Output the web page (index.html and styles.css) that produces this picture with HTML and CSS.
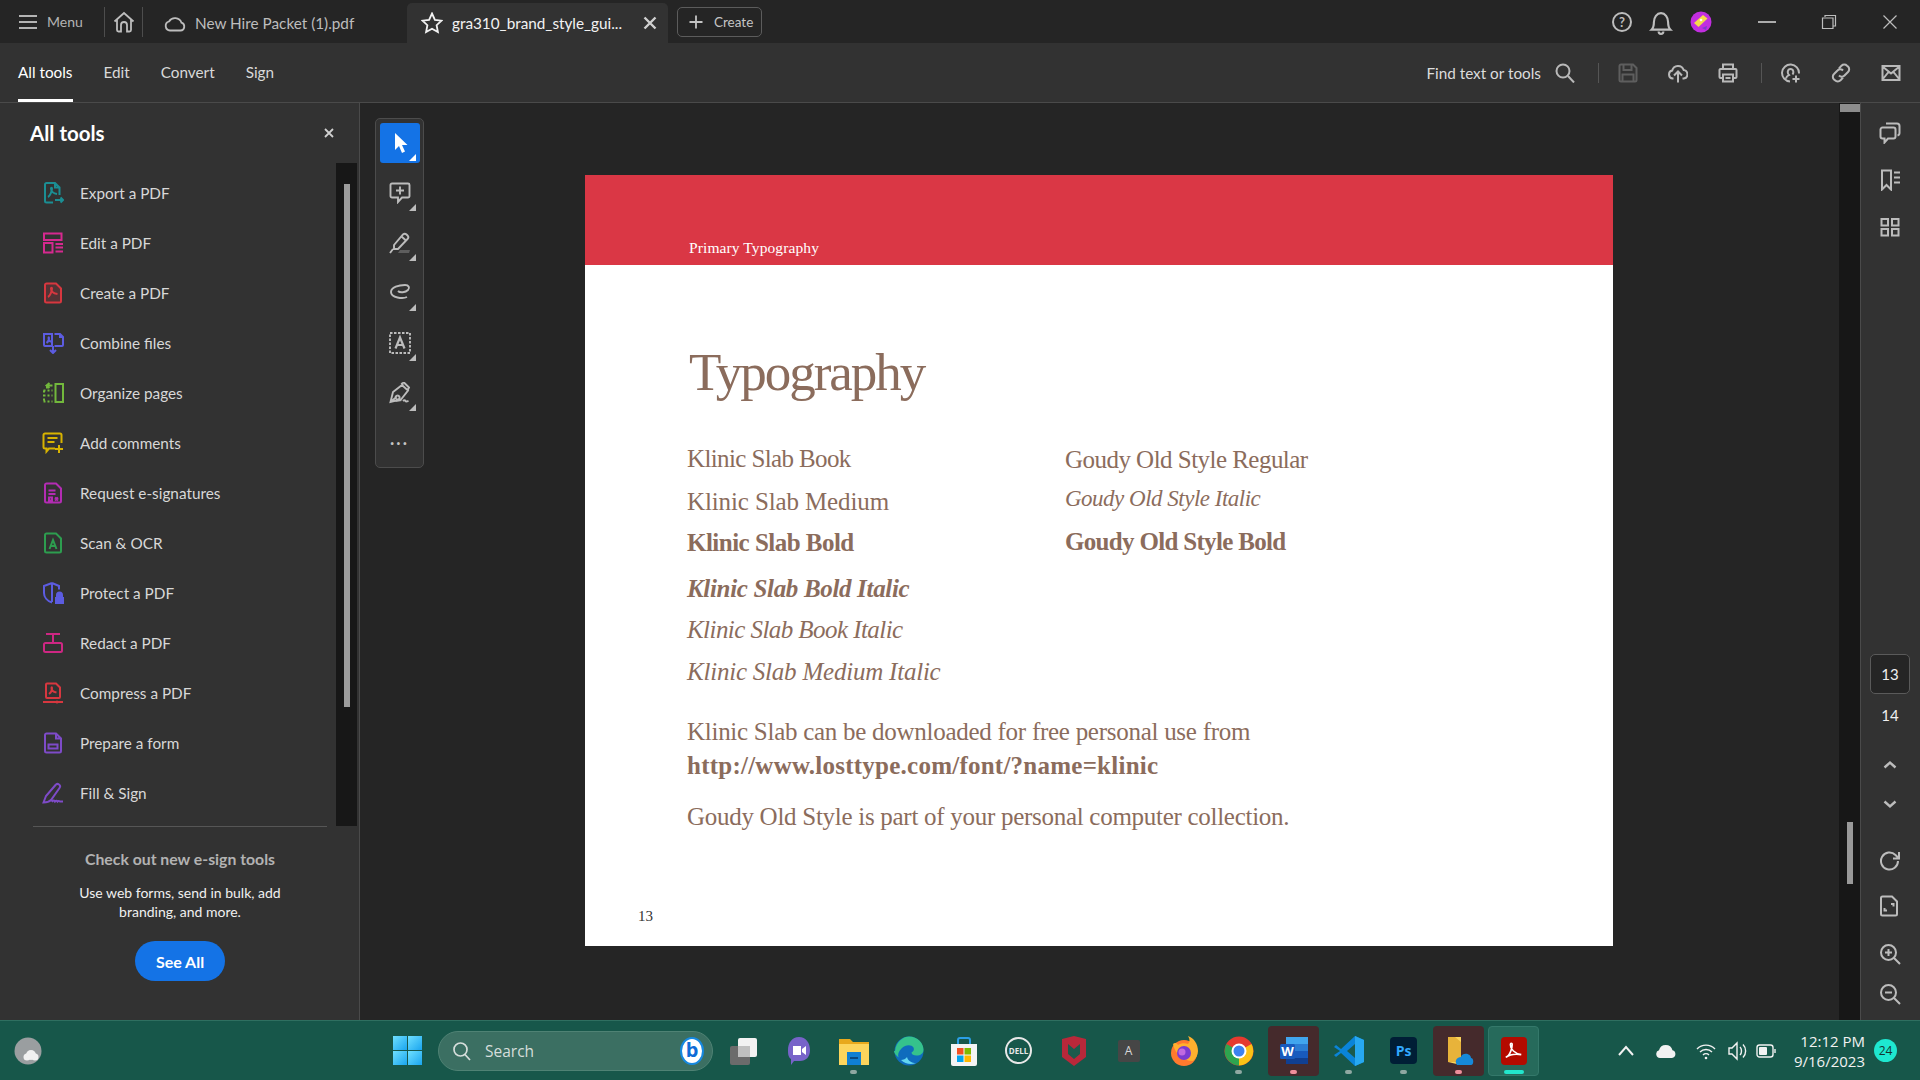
FILE: index.html
```html
<!DOCTYPE html>
<html lang="en">
  <head>
    <meta charset="UTF-8" />
    <title>gra310_brand_style_guide.pdf</title>
    <link rel="stylesheet" href="styles.css">
  </head>
  <body>
    <div class="app">
      <!-- tab strip -->
      <header class="titlebar">
        <div class="menu-btn">
          <svg class="ico-18" viewBox="0 0 18 18"><path d="M0 3h18M0 9h18M0 15h18" /></svg>
          <span>Menu</span>
        </div>
        <div class="home-btn">
          <svg class="ico-22" viewBox="0 0 22 22"><path d="M1.500 10.500 11 2l9.500 8.500M4 8.500V19a1.500 1.500 0 0 0 1.500 1.500H8V14a3 3 0 0 1 6 0v6.500h2.500A1.500 1.500 0 0 0 18 19V8.500" /></svg>
        </div>
        <div class="tab">
          <svg class="ico-22" viewBox="0 0 22 22"><path d="M6 18.500h10.500a4 4 0 0 0 1-7.800A7 7 0 0 0 5 9.500a4.600 4.600 0 0 0 1 9Z" /></svg>
          <span>New Hire Packet (1).pdf</span>
        </div>
        <div class="tab tab-active">
          <svg class="ico-22" viewBox="0 0 22 22"><path d="m11 1.500 2.900 6.300 6.600.8-4.900 4.600 1.300 6.900-5.900-3.400-5.900 3.400 1.300-6.900L1.500 8.600l6.600-.8Z" /></svg>
          <span class="tab-name">gra310_brand_style_gui...</span>
          <svg class="tab-close" viewBox="0 0 14 14"><path d="m1.500 1.500 11 11m0-11-11 11" /></svg>
        </div>
        <div class="create-btn">
          <svg class="ico-14" viewBox="0 0 14 14"><path d="M7 .5v13M.5 7h13" /></svg>
          <span>Create</span>
        </div>

        <div class="title-right">
          <div class="help">?</div>
          <svg class="bell" viewBox="0 0 22 22"><path d="M3 17.500c1.500-1.500 2-3 2-6.500 0-4 2.500-7.500 6-7.500s6 3.500 6 7.500c0 3.500.5 5 2 6.500ZM9 19a2 2 0 0 0 4 0" /></svg>
          <svg class="avatar" viewBox="0 0 22 22">
            <circle cx="11" cy="11" r="10.500" fill="#c22ee0" />
            <path d="m4 12 9-8 4.500 3.500-9 8.500Z" fill="#f6d94a" />
            <path d="m12 17 5-2-1 4Z" fill="#7a3bd0" />
            <circle cx="11" cy="9" r="1.300" fill="#fff" />
          </svg>
          <div class="win-btns">
            <div class="win-btn"><svg class="ico-18" viewBox="0 0 18 18"><path d="M0 9h18" /></svg></div>
            <div class="win-btn"><svg class="ico-16 thin" viewBox="0 0 16 16"><path d="M4 3V1.500h10.500V12H12M1.500 4h10.500v10.500H1.500Z" /></svg></div>
            <div class="win-btn"><svg class="ico-14 thin" viewBox="0 0 14 14"><path d="m.5.500 13 13m0-13-13 13" /></svg></div>
          </div>
        </div>
      </header>

      <!-- second row -->
      <nav class="toolbar">
        <a class="nav-item nav-active">All tools</a>
        <a class="nav-item">Edit</a>
        <a class="nav-item">Convert</a>
        <a class="nav-item">Sign</a>

        <div class="toolbar-right">
          <span class="find">Find text or tools</span>
          <svg class="tb-ico find-ico" viewBox="0 0 20 20"><circle cx="8" cy="8" r="6.500" /><path d="m13 13 6 6.500" /></svg>
          <span class="tb-sep"></span>
          <svg class="tb-ico muted" viewBox="0 0 20 20"><path d="M1.500 3A1.500 1.500 0 0 1 3 1.500h12L18.500 5v12a1.500 1.500 0 0 1-1.500 1.500H3A1.500 1.500 0 0 1 1.500 17ZM5.500 1.500V7h8V1.500M4.500 18.500V11.500h11v7" /></svg>
          <svg class="tb-ico" viewBox="0 0 20 20"><path d="M5.500 15.500H4.800a4 4 0 0 1-.6-7.900 6 6 0 0 1 11.500-.6 4.300 4.300 0 0 1 .1 8.500h-1.300M10 19.500V9M6 12.500 10 8.500l4 4" /></svg>
          <svg class="tb-ico" viewBox="0 0 20 20"><path d="M5 6V1.500h10V6M5 15H2.500a1 1 0 0 1-1-1V7a1 1 0 0 1 1-1h15a1 1 0 0 1 1 1v7a1 1 0 0 1-1 1H15M5 11.500h10v7H5ZM7.500 15h5" /></svg>
          <span class="tb-sep"></span>
          <svg class="tb-ico" viewBox="0 0 20 20"><path d="M9 18.500a8.500 8.500 0 1 1 9-8M5 15.500c.5-2.500 2-3 3-3.500-2-2-1.500-6 1.500-6s3.500 3.500 2 5.500M15 12.500v7M11.500 16h7" /></svg>
          <svg class="tb-ico" viewBox="0 0 20 20"><path d="m8 5.500 2.500-2.800a3.800 3.800 0 0 1 5.500 0l1 .8a3.800 3.800 0 0 1 0 5.500l-3.500 3.500a3.800 3.800 0 0 1-5.500 0M12 14.500l-2.500 2.800a3.800 3.800 0 0 1-5.500 0l-1-.8a3.800 3.800 0 0 1 0-5.500L6.500 7.500a3.800 3.800 0 0 1 5.500 0" /></svg>
          <svg class="tb-ico" viewBox="0 0 20 20"><path d="M1.500 3h17v14h-17ZM1.500 3.500 10 10.500l8.500-7M1.500 16.500l6-7.500M18.500 16.500l-6-7.500" /></svg>
        </div>
      </nav>

      <div class="main">
        <!-- all tools panel -->
        <aside class="panel">
          <div class="panel-head">
            <h2>All tools</h2>
            <svg class="panel-close" viewBox="0 0 10 10"><path d="m1 1 8 8m0-8-8 8" /></svg>
          </div>
          <div class="panel-scroll">
            <ul class="tool-list">
              <li><svg class="c-teal" viewBox="0 0 22 22"><path d="M11 20.500H4.500A1.500 1.500 0 0 1 3 19V2.500A1.500 1.500 0 0 1 4.500 1H13l4.500 4.500V13M13 1v4.500h4.500M6 15c2-1 4-6 4-8.500 0-1-1 -1-1 0 0 3 3 5 6 5.500M13 18h8M18.500 15.500 21 18l-2.500 2.500" /></svg><span>Export a PDF</span></li>
              <li><svg class="c-pink" viewBox="0 0 22 22"><path d="M2 1.500h17.500v6.500H2ZM2 11h8.500v9.500H2ZM13.500 12H21M13.500 15.500H21M13.500 19.500H21" /></svg><span>Edit a PDF</span></li>
              <li><svg class="c-red" viewBox="0 0 22 22"><path class="tint" d="M4.500 1.500H14L19 6.500V19a1.500 1.500 0 0 1-1.500 1.500h-13A1.500 1.500 0 0 1 3 19V3a1.500 1.500 0 0 1 1.500-1.500Z" /><path d="M6 15c2-1 4-6 4-8.500 0-1-1-1-1 0 0 3 3 5 6.500 5.500" /></svg><span>Create a PDF</span></li>
              <li><svg class="c-indigo" viewBox="0 0 22 22"><path d="M2 2h8v12H3a1 1 0 0 1-1-1ZM12.500 14H20a1 1 0 0 0 1-1V5l-3-3h-5.500M18 2v3h3M11 14v7M8 18l3 3 3-3M4.500 11c1.500-1 2.500-3 2.500-5 0-1-.5-1-.5 0 0 2 1 3 2.500 4" /></svg><span>Combine files</span></li>
              <li><svg class="c-green" viewBox="0 0 22 22"><path d="M13.500 2H21v18h-7.500Z" /><path d="M10.500 3.500H5M7.500 1 4.500 3.500 7.500 6M5 3.500v3" /><path class="dots" d="M1.500 8.500h9M1.500 13.500h9M1.500 19.500h9M2 8.500v11" /></svg><span>Organize pages</span></li>
              <li><svg class="c-yellow" viewBox="0 0 22 22"><path d="M13 16.500H7l-2.500 3v-3H3a1.500 1.500 0 0 1-1.500-1.500V3A1.500 1.500 0 0 1 3 1.500h15A1.500 1.500 0 0 1 19.500 3v8M5.500 6h10M5.500 10h7M17 13v8M13 17h8" /></svg><span>Add comments</span></li>
              <li><svg class="c-purple" viewBox="0 0 22 22"><path d="M4.500 1.500H14L19 6.500V19a1.500 1.500 0 0 1-1.500 1.500h-13A1.500 1.500 0 0 1 3 19V3a1.500 1.500 0 0 1 1.500-1.500ZM6.500 8.500h7M6.500 12h7M7 15.500h3v3H7ZM13 15.500l3 3m0-3-3 3" /></svg><span>Request e-signatures</span></li>
              <li><svg class="c-scan" viewBox="0 0 22 22"><path d="M4.500 1.500H14L19 6.500V19a1.500 1.500 0 0 1-1.500 1.500h-13A1.500 1.500 0 0 1 3 19V3a1.500 1.500 0 0 1 1.500-1.500ZM7.500 17l3.500-9 3.500 9M8.800 14h4.400" /></svg><span>Scan &amp; OCR</span></li>
              <li><svg class="c-indigo" viewBox="0 0 22 22"><path d="M10 1 2 4v7c0 4 3 8 8 9.500M10 1l7 3v3.500M10 1v19" /><path class="solid" d="M14 15v-2a3.500 3.500 0 0 1 7 0v2h1v7h-9v-7Z" /></svg><span>Protect a PDF</span></li>
              <li><svg class="c-pink2" viewBox="0 0 22 22"><path d="M4 2h14M11 2v8M3.500 11h15A1.500 1.500 0 0 1 20 12.500v6a1.500 1.500 0 0 1-1.500 1.500h-15A1.500 1.500 0 0 1 2 18.500v-6A1.500 1.500 0 0 1 3.500 11Z" /></svg><span>Redact a PDF</span></li>
              <li><svg class="c-red" viewBox="0 0 22 22"><path d="M5 1.500h9l4 4V15a1 1 0 0 1-1 1H5a1 1 0 0 1-1-1V2.500a1 1 0 0 1 1-1ZM7 12c1.500-1 3-4 3-6 0-1-.5-1-.5 0 0 2 2 4 5 4.500M1 20h20" /><circle class="solid" cx="15" cy="20" r="1.500" /></svg><span>Compress a PDF</span></li>
              <li><svg class="c-violet" viewBox="0 0 22 22"><path d="M4.500 1.500H14L19 6.500V19a1.500 1.500 0 0 1-1.500 1.500h-13A1.500 1.500 0 0 1 3 19V3a1.500 1.500 0 0 1 1.500-1.500ZM14 1.500v5h5M6.500 12.500h9v4h-9Z" /></svg><span>Prepare a form</span></li>
              <li><svg class="c-violet" viewBox="0 0 22 22"><path d="M1.500 20.500 4 14 13.500 3a2.500 2.500 0 0 1 4 3L9 18c-1.500 1.500-4.500 2.500-7.500 2.500ZM10 20c1-2 2.500-2 3-.5 1-1 2-1 2.500 0 .8-.8 1.500-.8 2.500 0h3" /></svg><span>Fill &amp; Sign</span></li>
            </ul>
            <div class="panel-track"><div class="panel-thumb"></div></div>
          </div>
          <div class="promo">
            <h3>Check out new e-sign tools</h3>
            <p>Use web forms, send in bulk, add<br>branding, and more.</p>
            <button class="see-all">See All</button>
          </div>
        </aside>

        <!-- document area -->
        <section class="canvas">
          <div class="quick-tools">
            <div class="qt qt-active"><svg viewBox="0 0 22 22"><path class="fill" d="M6 1v17l4-4 3 7 3-1.500-3-6.500h5.500Z" /></svg></div>
            <div class="qt"><svg viewBox="0 0 22 22"><path d="M3 1.500h16A1.500 1.500 0 0 1 20.500 3v11a1.500 1.500 0 0 1-1.500 1.500h-6L9 20v-4.500H3A1.500 1.500 0 0 1 1.500 14V3A1.500 1.500 0 0 1 3 1.500ZM11 4.500v8M7 8.500h8" /></svg></div>
            <div class="qt"><svg viewBox="0 0 22 22"><path d="m5 13 9-10.500a2.500 2.500 0 0 1 3.500 0l1 1a2.500 2.500 0 0 1 0 3.500L9 17H5ZM12.500 4.500l5 4.500M1 21l3-4" /><path class="dim" d="M9 21h11l1-3H11Z" /></svg></div>
            <div class="qt"><svg viewBox="0 0 22 22"><path d="M18 15c-4 2-16 1-16-5 0-5 8-7 14-7 4 0 5 3 3 5-2.500 2.500-8 3-10 1" /></svg></div>
            <div class="qt"><svg viewBox="0 0 22 22"><path class="dash" d="M1 1h20v20H1Z" /><path class="bold" d="m6.500 16.500 4.500-11 4.500 11M8 13h6" /></svg></div>
            <div class="qt"><svg viewBox="0 0 22 22"><path d="M1.500 20 4 10l9-7 6 5.500-7 9Zm5-1 6-1M14 3l-1-1.500 2-1 5 5-1 2M8.500 13.500a2 2 0 1 0 .1 0M1.500 20l6-5M14 19c1-1 2-1 2.500 0s1.500.5 3 0" /></svg></div>
            <div class="qt-more">...</div>
          </div>

          <article class="page">
            <div class="page-band">Primary Typography</div>
            <div class="page-body">
              <h1>Typography</h1>
              <div class="fonts">
                <ul class="font-col">
                  <li class="k-book">Klinic Slab Book</li>
                  <li class="k-medium">Klinic Slab Medium</li>
                  <li class="k-bold">Klinic Slab Bold</li>
                  <li class="k-bold-italic">Klinic Slab Bold Italic</li>
                  <li class="k-book-italic">Klinic Slab Book Italic</li>
                  <li class="k-medium-italic">Klinic Slab Medium Italic</li>
                </ul>
                <ul class="font-col">
                  <li class="g-regular">Goudy Old Style Regular</li>
                  <li class="g-italic">Goudy Old Style Italic</li>
                  <li class="g-bold">Goudy Old Style Bold</li>
                </ul>
              </div>
              <p class="note note-k">Klinic Slab can be downloaded for free personal use from<br><b>http://www.losttype.com/font/?name=klinic</b></p>
              <p class="note note-2">Goudy Old Style is part of your personal computer collection.</p>
              <div class="page-no">13</div>
            </div>
          </article>
        </section>

        <div class="doc-track">
          <div class="doc-thumb-top"></div>
          <div class="doc-thumb"></div>
        </div>

        <!-- right rail -->
        <aside class="rail">
          <svg class="rail-ico" viewBox="0 0 22 22"><path d="M7 1.500h11A2.500 2.500 0 0 1 20.500 4v7a2.500 2.500 0 0 1-2 2.400M3.500 5.500h11A2 2 0 0 1 16.500 7.500v7a2 2 0 0 1-2 2H9l-3.500 4v-4H3.500a2 2 0 0 1-2-2v-7a2 2 0 0 1 2-2Z" /></svg>
          <svg class="rail-ico" viewBox="0 0 22 22"><path d="M3 1.500h9v19L7.500 16 3 20.500ZM15 3.500h6M15 8.500h6M15 13.500h6" /></svg>
          <svg class="rail-ico" viewBox="0 0 22 22"><path d="M2.500 3h6.500v6.500H2.500ZM13 3h6.500v6.500H13ZM2.500 13H9v6.500H2.500ZM13 13h6.500v6.500H13Z" /></svg>

          <div class="page-box">13</div>
          <div class="page-next">14</div>
          <svg class="rail-chev chev-up" viewBox="0 0 14 10"><path d="m1.500 7.500 5.500-5 5.500 5" /></svg>
          <svg class="rail-chev chev-down" viewBox="0 0 14 10"><path d="m1.500 2.500 5.500 5 5.500-5" /></svg>
          <div class="rail-sep"></div>
          <svg class="rail-ico r-rotate" viewBox="0 0 22 22"><path d="M19 11a8.500 8.500 0 1 1-2.500-6L19.500 8M20 2v6.500h-6" /></svg>
          <svg class="rail-ico r-fit" viewBox="0 0 22 22"><path d="M3.500 1.500H13l5 5V19a1.500 1.500 0 0 1-1.500 1.500h-13A1.500 1.500 0 0 1 2 19V3a1.500 1.500 0 0 1 1.500-1.500ZM12 9h2.500v2.500M8 15.500H5.500V13" /></svg>
          <svg class="rail-ico r-zoom-in" viewBox="0 0 22 22"><circle cx="9.500" cy="9.500" r="7.500" /><path d="m15 15 6 6M9.500 6v7M6 9.500h7" /></svg>
          <svg class="rail-ico r-zoom-out" viewBox="0 0 22 22"><circle cx="9.500" cy="9.500" r="7.500" /><path d="m15 15 6 6M6 9.500h7" /></svg>
        </aside>
      </div>

      <!-- windows taskbar -->
      <footer class="taskbar">
        <svg class="widget" viewBox="0 0 28 28">
          <circle cx="14" cy="14" r="13.500" fill="#9a9ea0" />
          <circle cx="17" cy="18" r="5" fill="#f1f1f1" />
          <circle cx="21" cy="20" r="3.500" fill="#f1f1f1" />
          <circle cx="13" cy="20" r="3.500" fill="#f1f1f1" />
        </svg>

        <div class="win-logo"><i></i><i></i><i></i><i></i></div>

        <div class="search">
          <svg viewBox="0 0 20 20"><circle cx="8.500" cy="8.500" r="6.500" /><path d="m13 13.500 5 5.500" /></svg>
          <span>Search</span>
          <div class="bing">b</div>
        </div>

        <div class="apps">
          <div class="app-item">
            <svg viewBox="0 0 30 30"><rect x="9" y="2" width="19" height="19" rx="2" fill="#f2f2f2" /><rect x="1" y="10" width="20" height="19" rx="2" fill="#6b6b6b" /><rect x="9" y="10" width="12" height="11" fill="#c0c0c0" /></svg>
          </div>
          <div class="app-item">
            <svg viewBox="0 0 30 30"><path d="M15 1c7 0 11 6 11 13s-4 11-10 11h-6l-3 4v-6C4 21 4 17 4 14 4 7 8 1 15 1Z" fill="#7763c9" /><path d="M9 10h8v9H9ZM18 13l4-3v9l-4-3Z" fill="#fff" /></svg>
          </div>
          <div class="app-item has-dot">
            <svg viewBox="0 0 30 30"><path d="M0 3h11l3 3h16v22H0Z" fill="#e8a91c" /><path d="M0 8h30v21H0Z" fill="#fcd55c" /><path d="M8 16h14v13H8Z" fill="#0f7fd2" /><path d="M11 21h8v2h-8Z" fill="#09487f" /></svg>
          </div>
          <div class="app-item">
            <svg viewBox="0 0 30 30"><circle cx="15" cy="15" r="14.500" fill="#0f6cbd" /><path d="M1 15C2 5 10 .5 15 .5c9 0 14.500 7 14.500 13 0 4-3 6-7 6-3 0-5-1-5-3 2-1 3-3 2-5-2-3-8-3-12 1-3 3-4 6-3 9-2-2-4.500-4-4.500-6.500Z" fill="#35c28c" /><path d="M7 24c4 4 10 5 15 3-4 0-8-2-9-6-1 2-4 3-6 3Z" fill="#63d6f0" /></svg>
          </div>
          <div class="app-item">
            <svg viewBox="0 0 30 30"><path d="M2 8h26v20a2 2 0 0 1-2 2H4a2 2 0 0 1-2-2Z" fill="#f4f4f4" /><path d="M9 8V4a2 2 0 0 1 2-2h8a2 2 0 0 1 2 2v4" fill="none" stroke="#2b9fe6" stroke-width="2" /><rect x="8" y="12" width="6.500" height="6.500" fill="#f25022" /><rect x="15.500" y="12" width="6.500" height="6.500" fill="#7fba00" /><rect x="8" y="19.500" width="6.500" height="6.500" fill="#00a4ef" /><rect x="15.500" y="19.500" width="6.500" height="6.500" fill="#ffb900" /></svg>
          </div>
          <div class="app-item">
            <div class="dell">DELL</div>
          </div>
          <div class="app-item">
            <svg viewBox="0 0 30 30"><path d="M3 3 15 0l12 3v18l-12 9-12-9Z" fill="#b8283a" /><path d="M9 8l6 5 6-5v10l-6 5-6-5Z" fill="#1b5a4c" /></svg>
          </div>
          <div class="app-item">
            <div class="a-tile">A</div>
          </div>
          <div class="app-item">
            <svg viewBox="0 0 30 30"><circle cx="15" cy="17" r="13" fill="#ff7a2e" /><path d="M4 8c2 10 10 17 20 17 3-3 5-6 5-10C29 8 25 2 19 0c2 3 2 6 0 8-3-1-7-1-10 1-1-2-3-3-5-1Z" fill="#ffb02e" /><circle cx="15" cy="17" r="7" fill="#7a3bd0" /><circle cx="13" cy="16" r="3.500" fill="#c06ae0" /></svg>
          </div>
          <div class="app-item has-dot">
            <svg viewBox="0 0 30 30"><circle cx="15" cy="15" r="14.500" fill="#e53a2f" /><path d="M15 15 27.500 8A14.500 14.500 0 0 1 15 29.500Z" fill="#fbc116" /><path d="M15 15 15 29.500A14.500 14.500 0 0 1 2.500 8Z" fill="#2ea44f" /><circle cx="15" cy="15" r="7.500" fill="#fff" /><circle cx="15" cy="15" r="5.500" fill="#3c82f0" /></svg>
          </div>
          <div class="app-item app-open has-dot dot-pink">
            <svg viewBox="0 0 30 30"><path d="M7 1h21a1 1 0 0 1 1 1v25a1 1 0 0 1-1 1H7Z" fill="#2b7cd3" /><path d="M7 1h22v7H7Z" fill="#41a5ee" /><path d="M7 15h22v7H7Z" fill="#185abd" /><path d="M7 22h22v6H7Z" fill="#103f91" /><rect x="1" y="8" width="15" height="15" rx="1.500" fill="#185abd" /><text class="word-w" x="8.500" y="20">W</text></svg>
          </div>
          <div class="app-item has-dot">
            <svg viewBox="0 0 30 30"><path d="M21 0 30 4v22l-9 4L7 17l-5 4-2-2 6-4-6-4 2-2 5 4Z" fill="#0a84d8" /><path d="m21 8-8 7 8 7Z" fill="#1b5a4c" /><path d="M21 0 30 4v22l-9 4Z" fill="#27a8f0" /></svg>
          </div>
          <div class="app-item has-dot">
            <div class="ps-tile">Ps</div>
          </div>
          <div class="app-item app-open has-dot dot-pink">
            <svg viewBox="0 0 30 30"><path d="M4 1h13v28l-13-3Z" fill="#fcd55c" /><path d="M4 1h7l6 5v23l-6-3H4Z" fill="#e8b33a" /><path d="M13 29c-3-4 0-8 4-8 1-5 10-4 10 1 3 0 3 7 0 7Z" fill="#1689d8" /></svg>
          </div>
          <div class="app-item app-active">
            <div class="acro-tile">
              <svg viewBox="0 0 22 22"><path d="M2 18c5-2 7-11 7-14 0-2-2-2-2 0 0 5 5 10 12 11-6-1-13 0-17 3Z" /></svg>
            </div>
          </div>
        </div>

        <div class="tray">
          <svg class="tray-ico" viewBox="0 0 20 20"><path d="m3 14 7-8 7 8" /></svg>
          <svg class="tray-ico tray-wide" viewBox="0 0 20 20"><path class="cloud" d="M4 17a4 4 0 0 1-1-7.800 7 7 0 0 1 13.500 0A4 4 0 0 1 16 17Z" /></svg>
          <svg class="tray-ico tray-wide thin" viewBox="0 0 20 20"><path d="M1 8a12.500 12.500 0 0 1 18 0M4 11a8.500 8.500 0 0 1 12 0M7 14a4.300 4.300 0 0 1 6 0" /><circle class="cloud" cx="10" cy="17" r="1.300" /></svg>
          <svg class="tray-ico tray-near thin" viewBox="0 0 20 20"><path d="M2 7h3l5-5v16l-5-5H2ZM13 6c2 2 2 6 0 8M16 3.500c3.500 3.500 3.500 9.500 0 13" /></svg>
          <svg class="tray-ico tray-close thin" viewBox="0 0 20 20"><rect x="1" y="4" width="16" height="12" rx="2.500" /><path d="M19 8v4" /><rect class="cloud" x="3" y="6" width="8" height="8" rx="1" /></svg>
          <div class="clock">12:12 PM<br>9/16/2023</div>
          <div class="badge">24</div>
        </div>
      </footer>
    </div>
  </body>
</html>
```

FILE: styles.css
```css
* {
  margin: 0;
  padding: 0;
  box-sizing: border-box;
}

body {
  width: 1920px;
  height: 1080px;
  overflow: hidden;
  background: #252525;
  font-family: Lato, "Noto Sans", sans-serif;
}

ul {
  list-style: none;
}

svg {
  display: block;
  flex: none;
  fill: none;
  stroke: currentColor;
  stroke-width: 1.8;
}

.app {
  display: flex;
  flex-direction: column;
  height: 1080px;
}

.ico-22 { width: 22px; height: 22px; }
.ico-18 { width: 18px; height: 18px; }
.ico-16 { width: 16px; height: 16px; }
.ico-14 { width: 14px; height: 14px; }
.thin { stroke-width: 1.2; }

/* tab strip */
.titlebar {
  display: flex;
  align-items: center;
  height: 43px;
  background: #252525;
  color: #bdbdbd;
  font-size: 15px;
}

.menu-btn {
  display: flex;
  align-items: center;
  gap: 10px;
  width: 104px;
  padding-left: 19px;
  font-size: 14px;
  color: #b4b4b4;
}

.home-btn {
  display: flex;
  align-items: center;
  justify-content: center;
  width: 39px;
  height: 30px;
  border-left: 1px solid #4d4d4d;
  border-right: 1px solid #4d4d4d;
}

.tab {
  display: flex;
  align-items: center;
  gap: 9px;
  width: 264px;
  height: 40px;
  margin-top: 3px;
  padding-left: 21px;
  font-size: 15.3px;
}

.tab-active {
  width: 261px;
  padding-left: 14px;
  background: #323232;
  border-radius: 5px 5px 0 0;
  color: #f2f2f2;
}

.tab-name {
  width: 182px;
  white-space: nowrap;
}

.tab-close {
  width: 14px;
  height: 14px;
  stroke: #d0d0d0;
  stroke-width: 2.4;
}

.create-btn {
  display: flex;
  align-items: center;
  gap: 11px;
  width: 85px;
  height: 30px;
  margin-left: 9px;
  padding-left: 11px;
  border: 1px solid #5c5c5c;
  border-radius: 5px;
  font-size: 13.5px;
  color: #c4c4c4;
}

.title-right {
  display: flex;
  align-items: center;
  gap: 16px;
  margin-left: auto;
}

.help {
  width: 20px;
  height: 20px;
  border: 2px solid #bdbdbd;
  border-radius: 50%;
  font-size: 13px;
  font-weight: 700;
  line-height: 16px;
  text-align: center;
}

.bell {
  width: 26px;
  height: 26px;
}

.avatar {
  width: 22px;
  height: 22px;
  stroke: none;
}

.win-btns {
  display: flex;
  margin-left: 8px;
}

.win-btn {
  display: flex;
  align-items: center;
  justify-content: center;
  width: 61px;
  height: 43px;
}

.win-btn:first-child {
  width: 62px;
}

/* second row */
.toolbar {
  display: flex;
  align-items: center;
  gap: 31px;
  height: 60px;
  padding-left: 18px;
  background: #323232;
  border-bottom: 1px solid #4a4a4a;
  color: #d9d9d9;
  font-size: 15.3px;
}

.nav-item {
  display: flex;
  align-items: center;
  height: 59px;
  border-bottom: 3px solid transparent;
  padding-top: 2px;
}

.nav-active {
  color: #fff;
  border-bottom-color: #fff;
}

.toolbar-right {
  display: flex;
  align-items: center;
  margin-left: auto;
  padding-right: 19px;
}

.find {
  margin-right: 14px;
  color: #dcdcdc;
}

.tb-ico {
  width: 20px;
  height: 20px;
  margin-left: 30px;
  color: #b9b9b9;
  stroke-width: 2;
}

.tb-ico.find-ico {
  margin-left: 0;
}

.tb-ico.muted {
  color: #5e5e5e;
}

.tb-sep {
  width: 1px;
  height: 20px;
  margin-left: 23px;
  background: #555;
}

.tb-sep + .tb-ico {
  margin-left: 19px;
}

.main {
  display: flex;
  height: 917px;
}

/* all tools panel */
.panel {
  display: flex;
  flex-direction: column;
  width: 360px;
  background: #323232;
  border-right: 1px solid #4a4a4a;
}

.panel-head {
  display: flex;
  align-items: center;
  justify-content: space-between;
  height: 60px;
  padding: 0 25px 0 30px;
}

.panel-head h2 {
  font-size: 20.5px;
  font-weight: 700;
  color: #fff;
}

.panel-close {
  width: 10px;
  height: 10px;
  color: #d0d0d0;
  stroke-width: 1.8;
}

.panel-scroll {
  display: flex;
  height: 663px;
}

.tool-list {
  width: 336px;
  padding-top: 5px;
}

.tool-list li {
  display: flex;
  align-items: center;
  gap: 16px;
  height: 50px;
  padding-left: 42px;
  font-size: 15.3px;
  color: #d8d8d8;
}

.tool-list svg {
  width: 22px;
  height: 22px;
  stroke-width: 2;
}

.c-teal { color: #1b8e93; }
.c-pink { color: #d6298f; }
.c-pink2 { color: #ce2783; }
.c-red { color: #d7373f; }
.c-indigo { color: #5c5ce0; }
.c-green { color: #72b83c; }
.c-yellow { color: #d8b300; }
.c-purple { color: #b32cb3; }
.c-scan { color: #2d9d4f; }
.c-violet { color: #7e4bc8; }

.tool-list .tint { fill: rgba(215, 55, 63, 0.2); }
.tool-list .solid { fill: currentColor; stroke: none; }
.tool-list .dots { stroke-dasharray: 2 2; }

.panel-track {
  width: 21px;
  background: #171717;
  padding: 21px 0 0 8px;
}

.panel-thumb {
  width: 6px;
  height: 523px;
  background: #9c9c9c;
}

.promo {
  margin: 0 32px 0 33px;
  padding-top: 21px;
  border-top: 1px solid #565656;
  text-align: center;
}

.promo h3 {
  font-size: 15.8px;
  font-weight: 700;
  line-height: 22px;
  color: #b2b2b2;
}

.promo p {
  margin-top: 13px;
  font-size: 14px;
  line-height: 19px;
  color: #f0f0f0;
}

.see-all {
  width: 90px;
  height: 40px;
  margin-top: 20px;
  border: 0;
  border-radius: 20px;
  background: #1473e6;
  color: #fff;
  font-family: inherit;
  font-size: 16px;
  font-weight: 700;
}

/* document area */
.canvas {
  display: flex;
  align-items: flex-start;
  width: 1479px;
  background: #252525;
}

.quick-tools {
  display: flex;
  flex-direction: column;
  align-items: center;
  width: 49px;
  height: 350px;
  margin: 15px 0 0 15px;
  padding-top: 4px;
  background: #323232;
  border: 1px solid #4c4c4c;
  border-radius: 5px;
}

.qt {
  position: relative;
  display: flex;
  align-items: center;
  justify-content: center;
  width: 40px;
  height: 40px;
  margin-bottom: 10px;
  border-radius: 3px;
  color: #bcbcbc;
}

.qt svg {
  width: 22px;
  height: 22px;
  stroke-width: 1.9;
}

.qt::after {
  content: "";
  position: absolute;
  right: 4px;
  bottom: 2px;
  border-style: solid;
  border-width: 0 0 7px 7px;
  border-color: transparent transparent #bcbcbc transparent;
}

.qt-active {
  background: #1473e6;
  color: #fff;
}

.qt-active::after {
  border-color: transparent transparent #fff transparent;
}

.qt svg .fill { fill: #fff; stroke: none; }
.qt svg .dim { fill: #5e5e5e; stroke: none; }
.qt svg .dash { stroke-dasharray: 2.5 1.5; }
.qt svg .bold { stroke-width: 2.2; }

.qt-more {
  height: 26px;
  margin-top: 10px;
  color: #c4c4c4;
  font-size: 18px;
  font-weight: 700;
  letter-spacing: 2px;
  line-height: 10px;
}

/* the pdf page */
.page {
  width: 1028px;
  height: 771px;
  margin: 72px 0 0 161px;
  background: #fff;
  font-family: "Liberation Serif", serif;
  color: #8b6c5c;
}

.page-band {
  display: flex;
  align-items: flex-end;
  height: 90px;
  padding: 0 0 8px 104px;
  background: #da3745;
  color: #fff;
  font-size: 15.5px;
  letter-spacing: 0.1px;
}

.page-body {
  padding-left: 102px;
}

.page-body h1 {
  margin-top: 77px;
  padding-left: 2px;
  font-size: 53px;
  font-weight: 400;
  line-height: 60px;
  letter-spacing: -2px;
}

.fonts {
  display: flex;
  margin-top: 39px;
}

.font-col {
  width: 378px;
}

.font-col li {
  height: 36px;
  font-size: 25px;
  line-height: 36px;
  white-space: nowrap;
}

.k-book { letter-spacing: -0.62px; }
.k-medium { margin-top: 7px; letter-spacing: -0.12px; }
.k-bold { margin-top: 5px; font-weight: 700; letter-spacing: -0.52px; }
.k-bold-italic { margin-top: 10px; font-weight: 700; font-style: italic; letter-spacing: -0.33px; }
.k-book-italic { margin-top: 5px; font-style: italic; letter-spacing: -0.56px; }
.k-medium-italic { margin-top: 6px; font-style: italic; letter-spacing: -0.22px; }
.g-regular { margin-top: 1px; letter-spacing: -0.53px; }
.font-col .g-italic { margin-top: 3px; font-size: 23px; font-style: italic; letter-spacing: -0.5px; }
.g-bold { margin-top: 7px; font-weight: 700; letter-spacing: -0.68px; }

.note {
  margin-top: 25px;
  font-size: 25px;
  line-height: 34px;
  white-space: nowrap;
  letter-spacing: -0.27px;
}

.note b {
  letter-spacing: 0.24px;
}

.note-2 {
  margin-top: 17px;
  letter-spacing: -0.28px;
}

.page-no {
  margin: 72px 0 0 -49px;
  font-size: 15px;
  line-height: 20px;
  color: #333;
}

.doc-track {
  width: 21px;
  background: #171717;
  padding-top: 1px;
}

.doc-thumb-top {
  height: 8px;
  margin-left: 1px;
  background: #8c8c8c;
}

.doc-thumb {
  width: 6px;
  height: 62px;
  margin: 710px 0 0 8px;
  background: #999;
}

/* right rail */
.rail {
  display: flex;
  flex-direction: column;
  align-items: center;
  width: 60px;
  padding-top: 19px;
  padding-right: 1px;
  background: #323232;
  border-left: 1px solid #4a4a4a;
  color: #bcbcbc;
}

.rail-ico {
  width: 22px;
  height: 22px;
  margin-bottom: 25px;
  stroke-width: 2;
}

.page-box,
.page-next {
  width: 40px;
  height: 40px;
  border-radius: 5px;
  color: #f0f0f0;
  font-size: 15px;
  line-height: 38px;
  text-align: center;
}

.page-next {
  line-height: 42px;
}

.page-box {
  margin-top: 391px;
  background: #252525;
  border: 1px solid #5a5a5a;
}

.rail-chev {
  width: 14px;
  height: 10px;
  stroke-width: 2.4;
}

.chev-up {
  margin-top: 26px;
}

.chev-down {
  margin-top: 29px;
}

.rail-sep {
  width: 41px;
  height: 1px;
  margin-top: 24px;
  background: #555;
}

.r-rotate { margin-top: 17px; margin-bottom: 23px; }
.r-fit { margin-bottom: 26px; }
.r-zoom-in { margin-bottom: 18px; }

/* taskbar */
.taskbar {
  display: flex;
  align-items: center;
  height: 60px;
  padding-left: 14px;
  background: #17574a;
  border-top: 1px solid #2f6f60;
}

.widget {
  width: 28px;
  height: 28px;
  stroke: none;
}

.win-logo {
  display: grid;
  grid-template-columns: 14px 14px;
  grid-template-rows: 14px 14px;
  gap: 1px;
  margin-left: 351px;
}

.win-logo i {
  background: linear-gradient(135deg, #6fe0ff, #1aa5ef);
}

.search {
  display: flex;
  align-items: center;
  width: 275px;
  height: 40px;
  margin-left: 16px;
  padding-left: 13px;
  border: 1px solid #4f8274;
  border-radius: 20px;
  background: #3b6f62;
  color: #d6dedb;
  font-family: "Open Sans", sans-serif;
  font-size: 15.5px;
}

.search svg {
  width: 20px;
  height: 20px;
  stroke-width: 1.7;
}

.search span {
  margin-left: 13px;
}

.bing {
  width: 24px;
  height: 28px;
  margin-left: auto;
  margin-right: 8px;
  border: 2px solid #1688e0;
  border-radius: 50%;
  background: #fff;
  color: #0f6cd6;
  font-size: 20px;
  font-weight: 700;
  line-height: 21px;
  text-align: center;
}

.apps {
  display: flex;
  margin-left: 3px;
}

.app-item {
  position: relative;
  display: flex;
  align-items: center;
  justify-content: center;
  width: 55px;
  height: 50px;
}

.app-item svg {
  width: 30px;
  height: 30px;
  stroke: none;
}

.app-open::before,
.app-active::before {
  content: "";
  position: absolute;
  inset: 0 2px;
  border-radius: 4px;
  background: #452a2c;
}

.app-active::before {
  background: #266a5b;
  border: 1px solid #34786a;
}

.app-item > * {
  position: relative;
}

.has-dot::after,
.app-active::after {
  content: "";
  position: absolute;
  bottom: 2px;
  left: 24px;
  width: 7px;
  height: 4px;
  border-radius: 2px;
  background: #8fa8a2;
}

.dot-pink::after {
  background: #ee8f9b;
}

.app-active::after {
  left: 18px;
  width: 20px;
  background: #22e6cc;
}

.word-w {
  fill: #fff;
  font-family: "Open Sans", sans-serif;
  font-size: 13px;
  font-weight: 700;
  text-anchor: middle;
}

.dell {
  width: 27px;
  height: 27px;
  border: 2px solid #e8e8e8;
  border-radius: 50%;
  color: #e8e8e8;
  font-family: "Open Sans", sans-serif;
  font-size: 8px;
  font-weight: 700;
  line-height: 23px;
  text-align: center;
}

.a-tile {
  width: 22px;
  height: 22px;
  border-radius: 2px;
  background: #464646;
  color: #d8d8d8;
  font-family: "Open Sans", sans-serif;
  font-size: 12px;
  line-height: 22px;
  text-align: center;
}

.ps-tile {
  width: 27px;
  height: 27px;
  border-radius: 4px;
  background: #001e36;
  color: #31a8ff;
  font-family: "Open Sans", sans-serif;
  font-size: 14px;
  font-weight: 700;
  line-height: 27px;
  text-align: center;
}

.acro-tile {
  display: flex;
  align-items: center;
  justify-content: center;
  width: 26px;
  height: 28px;
  border-radius: 4px;
  background: #b30b00;
}

.acro-tile svg {
  width: 20px;
  height: 20px;
  stroke: #fff;
  stroke-width: 1.8;
}

.tray {
  display: flex;
  align-items: center;
  margin-left: 75px;
  color: #f2f2f2;
}

.tray-ico {
  width: 20px;
  height: 20px;
  stroke-width: 2;
}

.tray-wide { margin-left: 20px; }
.tray-near { margin-left: 11px; }
.tray-close { margin-left: 9px; }

.tray-ico .cloud {
  fill: currentColor;
  stroke: none;
}

.tray-ico.thin {
  stroke-width: 1.4;
}

.clock {
  width: 89px;
  font-family: "Open Sans", sans-serif;
  font-size: 15px;
  line-height: 20px;
  text-align: right;
  white-space: nowrap;
}

.badge {
  width: 23px;
  height: 23px;
  margin-left: 9px;
  border-radius: 50%;
  background: #1ee8d0;
  color: #14332d;
  font-family: "Open Sans", sans-serif;
  font-size: 12px;
  line-height: 23px;
  text-align: center;
}
```
